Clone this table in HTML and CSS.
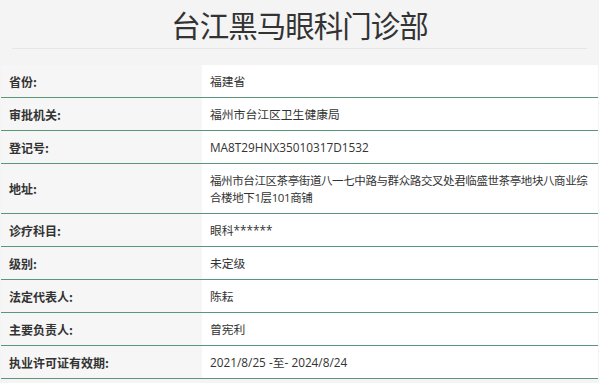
FILE: index.html
```html
<!DOCTYPE html>
<html lang="zh-CN">
<head>
<meta charset="utf-8">
<title>台江黑马眼科门诊部</title>
<link rel="stylesheet" href="styles.css">
</head>
<body>
<div class="page">
  <header class="head">
    <h1 class="title">台江黑马眼科门诊部</h1>
  </header>
  <hr class="rule">
  <div class="info">
    <div class="row"><div class="label">省份:</div><div class="value">福建省</div></div>
    <div class="row"><div class="label">审批机关:</div><div class="value">福州市台江区卫生健康局</div></div>
    <div class="row"><div class="label">登记号:</div><div class="value">MA8T29HNX35010317D1532</div></div>
    <div class="row tall"><div class="label">地址:</div><div class="value addr">福州市台江区茶亭街道八一七中路与群众路交叉处君临盛世茶亭地块八商业综合楼地下1层101商铺</div></div>
    <div class="row"><div class="label">诊疗科目:</div><div class="value">眼科******</div></div>
    <div class="row"><div class="label">级别:</div><div class="value">未定级</div></div>
    <div class="row"><div class="label">法定代表人:</div><div class="value">陈耘</div></div>
    <div class="row"><div class="label">主要负责人:</div><div class="value">曾宪利</div></div>
    <div class="row"><div class="label">执业许可证有效期:</div><div class="value">2021/8/25 -至- 2024/8/24</div></div>
  </div>
</div>
</body>
</html>
```
FILE: styles.css
```css
html, body {
  margin: 0;
  padding: 0;
  background: #f4f4f4;
}
body {
  font-family: "Open Sans", "Noto Sans CJK SC", sans-serif;
  color: #333;
}
.page {
  padding: 0 1px;
}
.head {
  height: 48px;
  display: flex;
  align-items: center;
  justify-content: center;
}
.title {
  margin: 0;
  font-family: "Noto Sans CJK SC", sans-serif;
  font-size: 29.5px;
  font-weight: 400;
  line-height: 44px;
  color: #333;
  letter-spacing: -1px;
}
.rule {
  margin: 0 11px;
  border: 0;
  height: 1px;
  background: #e6e6e6;
}
.info {
  margin-top: 16px;
}
.row {
  display: grid;
  grid-template-columns: 201px 1fr;
  height: 33px;
  box-sizing: border-box;
  border-bottom: 1px solid #5a977a;
}
.row.tall {
  height: 50px;
}
.label,
.value {
  display: flex;
  align-items: center;
  padding: 0 8px;
  line-height: 17px;
}
.label {
  background: #f6f6f6;
  font-family: "Noto Sans CJK SC", sans-serif;
  font-size: 12px;
  font-weight: 700;
  color: #333;
}
.value {
  background: #fff;
  font-size: 11.8px;
  color: #333;
  padding-right: 4px;
}
.value.addr {
  font-size: 11.5px;
  letter-spacing: -0.4px;
}
```
